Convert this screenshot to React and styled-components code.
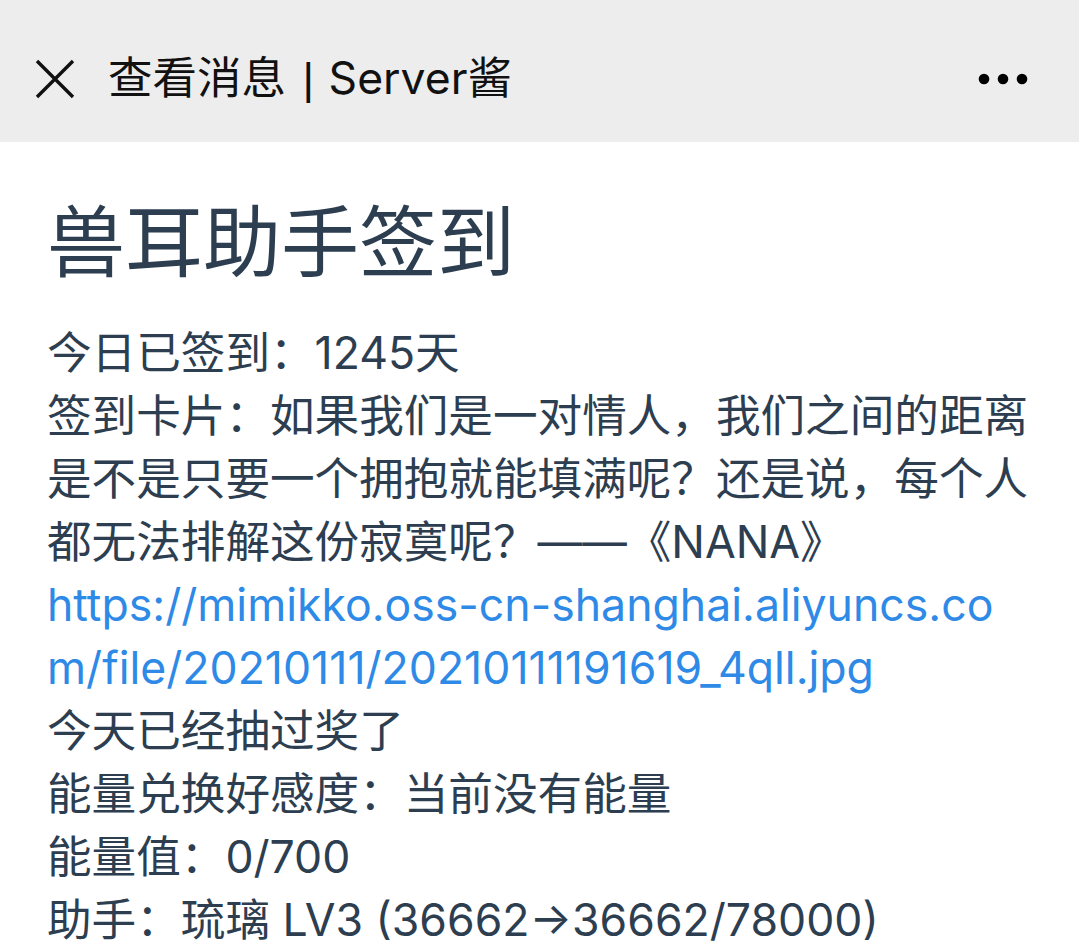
import React from "react";
import styled, { createGlobalStyle } from "styled-components";

const Global = createGlobalStyle`
  html, body { margin: 0; padding: 0; background: #ffffff; }
  body { font-family: Inter, "Noto Sans CJK SC", sans-serif; }
`;

const Page = styled.div`
  width: 1079px;
  min-height: 948px;
  background: #ffffff;
  overflow: hidden;
`;

const TopBar = styled.header`
  height: 142px;
  background: #ededed;
  display: flex;
  align-items: center;
  padding: 16px 50px 0 34px;
  box-sizing: border-box;
`;

const IconButton = styled.button`
  border: 0;
  background: transparent;
  padding: 0;
  display: flex;
  align-items: center;
  justify-content: center;
  width: ${(p) => p.$w}px;
  height: 60px;
  cursor: pointer;
`;

const BarTitle = styled.h1`
  flex: 1;
  margin: 0 0 0 32px;
  font-size: 44.5px;
  font-weight: 400;
  color: #111111;
  line-height: 1;
  font-family: Inter, "Noto Sans CJK SC", sans-serif;
  white-space: nowrap;
`;

const Divider = styled.span`
  font-family: "Liberation Sans", sans-serif;
  margin: 0 2px 0 4px;
`;

const Content = styled.main`
  padding: 48px 46px 0 47px;
`;

const Heading = styled.h2`
  margin: 0 0 38px;
  font-size: 78px;
  font-weight: 400;
  line-height: 94px;
  color: #2c3e50;
  font-family: "Noto Sans CJK SC", sans-serif;
`;

const Body = styled.div`
  font-size: 44.6px;
  line-height: 63px;
  color: #2c3e50;
  font-family: Inter, "Noto Sans CJK SC", sans-serif;
`;

const Line = styled.div`
  word-break: break-all;
`;

const Link = styled.a`
  color: #2e8ae6;
  text-decoration: none;
  word-break: break-all;
  display: block;
`;

const CloseIcon = () => (
  <svg width="42" height="42" viewBox="0 0 42 42">
    <path d="M3 3 L39 39 M39 3 L3 39" stroke="#111" strokeWidth="3.4" strokeLinecap="butt" />
  </svg>
);

const MoreIcon = () => (
  <svg width="52" height="14" viewBox="0 0 52 14">
    <circle cx="7" cy="7" r="5.3" fill="#000" />
    <circle cx="26" cy="7" r="5.3" fill="#000" />
    <circle cx="45" cy="7" r="5.3" fill="#000" />
  </svg>
);

export default function App() {
  return (
    <Page>
      <Global />
      <TopBar>
        <IconButton $w={42}>
          <CloseIcon />
        </IconButton>
        <BarTitle>
          查看消息 <Divider>|</Divider> Server酱
        </BarTitle>
        <IconButton $w={52}>
          <MoreIcon />
        </IconButton>
      </TopBar>
      <Content>
        <Heading>兽耳助手签到</Heading>
        <Body>
          <Line>今日已签到：1245天</Line>
          <Line>签到卡片：如果我们是一对情人，我们之间的距离是不是只要一个拥抱就能填满呢？还是说，每个人都无法排解这份寂寞呢？——《NANA》</Line>
          <Link href="#">https://mimikko.oss-cn-shanghai.aliyuncs.com/file/20210111/20210111191619_4qll.jpg</Link>
          <Line>今天已经抽过奖了</Line>
          <Line>能量兑换好感度：当前没有能量</Line>
          <Line>能量值：0/700</Line>
          <Line>助手：琉璃 LV3 (36662→36662/78000)</Line>
        </Body>
      </Content>
    </Page>
  );
}
